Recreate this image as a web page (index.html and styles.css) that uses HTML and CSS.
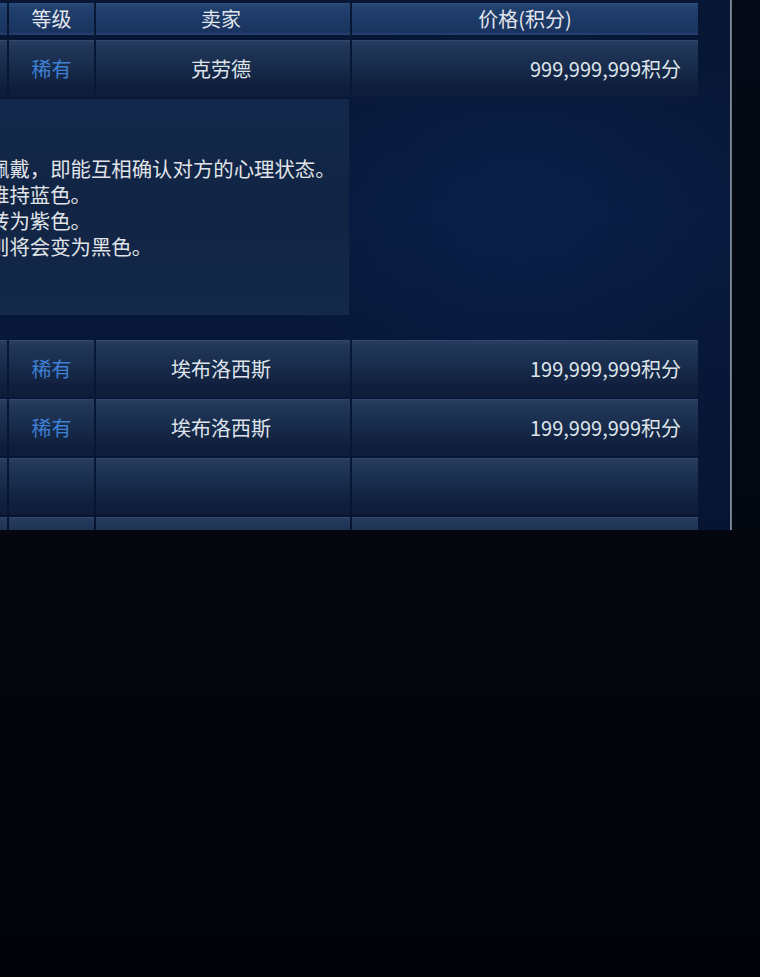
FILE: index.html
```html
<!DOCTYPE html>
<html lang="zh-CN">
<head>
<meta charset="utf-8">
<title>交易列表</title>
<link rel="stylesheet" href="styles.css">
</head>
<body>
<div class="screen">
  <div class="top">
    <div class="panel">
      <div class="grid head">
        <div class="cell"></div>
        <div class="cell">等级</div>
        <div class="cell seller">卖家</div>
        <div class="cell">价格(积分)</div>
      </div>
      <div class="grid row first">
        <div class="cell"></div>
        <div class="cell rare">稀有</div>
        <div class="cell seller">克劳德</div>
        <div class="cell price">999,999,999积分</div>
      </div>
      <div class="detail">
        <div class="desc">
          <p>佩戴，即能互相确认对方的心理状态。</p>
          <p>维持蓝色。</p>
          <p>转为紫色。</p>
          <p>则将会变为黑色。</p>
        </div>
      </div>
      <div class="grid row">
        <div class="cell"></div>
        <div class="cell rare">稀有</div>
        <div class="cell seller">埃布洛西斯</div>
        <div class="cell price">199,999,999积分</div>
      </div>
      <div class="grid row">
        <div class="cell"></div>
        <div class="cell rare">稀有</div>
        <div class="cell seller">埃布洛西斯</div>
        <div class="cell price">199,999,999积分</div>
      </div>
      <div class="grid row">
        <div class="cell"></div>
        <div class="cell"></div>
        <div class="cell"></div>
        <div class="cell"></div>
      </div>
      <div class="grid row">
        <div class="cell"></div>
        <div class="cell"></div>
        <div class="cell"></div>
        <div class="cell"></div>
      </div>
    </div>
    <div class="rule"></div>
    <div class="side"></div>
  </div>
  <div class="bottom"></div>
</div>
</body>
</html>
```
FILE: styles.css
```css
html, body {
  margin: 0;
  padding: 0;
  background: #03050b;
}
.screen {
  width: 760px;
  height: 977px;
  overflow: hidden;
  font-family: "Noto Sans CJK SC", "Noto Sans", sans-serif;
  color: #dfe4ea;
}
.top {
  display: flex;
  height: 530px;
}
.panel {
  width: 730px;
  flex: none;
  overflow: hidden;
  display: flex;
  flex-direction: column;
  padding-top: 3px;
  box-sizing: border-box;
  background:
    radial-gradient(ellipse 260px 200px at 520px 210px, rgba(10, 36, 84, 0.55), rgba(10, 36, 84, 0) 100%),
    linear-gradient(180deg, #071634 0%, #08193c 40%, #071533 100%);
}
.grid {
  display: grid;
  grid-template-columns: 7px 85px 254px 346px;
  column-gap: 2px;
  flex: none;
}
.cell {
  display: flex;
  align-items: center;
  justify-content: center;
  font-size: 20px;
  line-height: 1;
  white-space: nowrap;
  overflow: hidden;
}
.seller {
  padding-right: 4px;
}
.head {
  height: 32px;
  margin-bottom: 5px;
}
.head .cell {
  background: linear-gradient(180deg, #2a4a78 0%, #21406e 15%, #1b3764 70%, #1a3460 90%, #26436f 100%);
  color: #e2e6ec;
}
.row {
  height: 57px;
  margin-bottom: 2px;
}
.row .cell {
  background: linear-gradient(180deg, #2a3f62 0%, #223759 10%, #182c4c 45%, #111f3d 80%, #0e1c39 100%);
  box-shadow: inset 0 1px 0 rgba(120, 150, 190, 0.12);
}
.rare {
  color: #3f80d2;
}
.price {
  justify-content: flex-end;
  padding-right: 17px;
}
.detail {
  height: 216px;
  margin-bottom: 25px;
  flex: none;
  display: flex;
}
.desc {
  width: 349px;
  overflow: hidden;
  padding-top: 56px;
  box-sizing: border-box;
  background: linear-gradient(180deg, #13284b 0%, #112444 50%, #13284a 100%);
}
.desc p {
  margin: 0 0 0 -11px;
  font-size: 20.4px;
  line-height: 26px;
  white-space: nowrap;
  color: #e0e4e8;
}
.rule {
  width: 2px;
  flex: none;
  background: linear-gradient(90deg, #8995a5, #5e6a7a);
}
.side {
  flex: 1;
  background: linear-gradient(180deg, #040a16 0%, #03070f 100%);
}
.bottom {
  height: 447px;
  background: linear-gradient(180deg, #04070f 0%, #03050c 40%, #020308 100%);
}
```
